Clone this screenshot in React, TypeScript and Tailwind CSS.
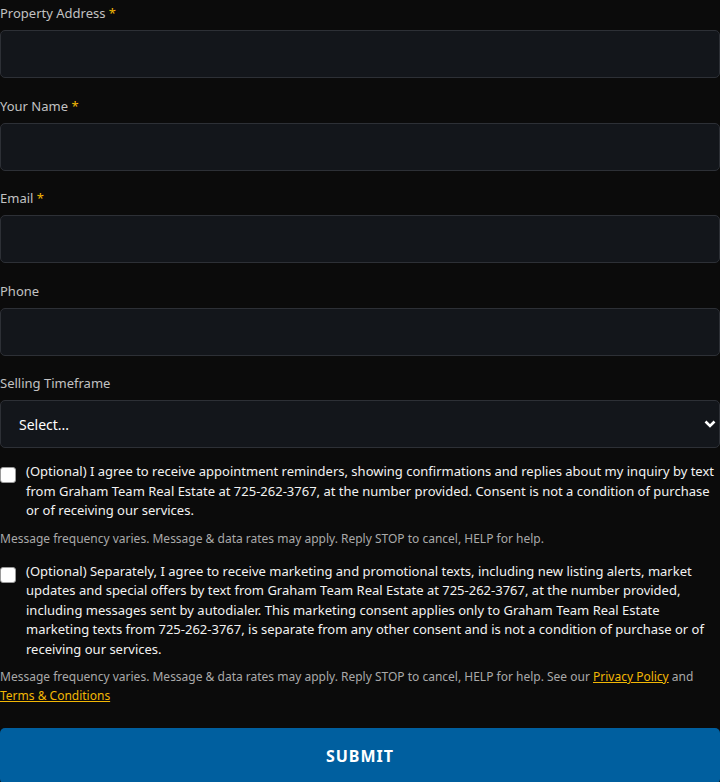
import React from "react";

const Label = ({ text, req }: { text: string; req?: boolean }) => (
  <label className="block text-[13px] leading-5 text-[#c2c2c2] mb-[7px]">
    {text}
    {req && <span className="text-[#f2b705]"> *</span>}
  </label>
);

const Input = () => (
  <input
    type="text"
    className="block w-full h-[48px] rounded-[5px] border border-[#2d3036] bg-[#13161b] px-4 text-white outline-none"
  />
);

export default function App() {
  return (
    <div
      className="min-h-[782px] bg-[#0b0b0b] pt-[3px] overflow-hidden"
      style={{ fontFamily: '"Noto Sans", sans-serif' }}
    >
      <div className="flex flex-col">
        <div>
          <Label text="Property Address" req />
          <Input />
        </div>
        <div className="mt-[18px]">
          <Label text="Your Name" req />
          <Input />
        </div>
        <div className="mt-[17px]">
          <Label text="Email" req />
          <Input />
        </div>
        <div className="mt-[18px]">
          <Label text="Phone" />
          <Input />
        </div>
        <div className="mt-[17px]">
          <Label text="Selling Timeframe" />
          <div className="relative">
            <select className="block w-full h-[48px] appearance-none rounded-[5px] border border-[#2d3036] bg-[#13161b] pl-[18px] text-[14px] text-white outline-none">
              <option>Select...</option>
            </select>
            <svg
              className="absolute right-[4px] top-[19px] pointer-events-none"
              width="12"
              height="10"
              viewBox="0 0 12 10"
            >
              <path d="M1.5 2.5 L6 7 L10.5 2.5" fill="none" stroke="#ffffff" strokeWidth="2.6" />
            </svg>
          </div>
        </div>

        <div className="mt-[14px] flex items-start gap-[10px]">
          <span className="mt-[5px] h-[16px] w-[16px] shrink-0 rounded-[3px] bg-white border border-[#9a9a9a]" />
          <p className="text-[13px] leading-[19.5px] text-[#f2f2f2]">
            (Optional) I agree to receive appointment reminders, showing confirmations and replies about my inquiry by text from Graham Team Real Estate at 725-262-3767, at the number provided. Consent is not a condition of purchase or of receiving our services.
          </p>
        </div>
        <p className="mt-[8px] text-[12px] leading-[19px] text-[#a9a9a9]">
          Message frequency varies. Message &amp; data rates may apply. Reply STOP to cancel, HELP for help.
        </p>

        <div className="mt-[14px] flex items-start gap-[10px]">
          <span className="mt-[5px] h-[16px] w-[16px] shrink-0 rounded-[3px] bg-white border border-[#9a9a9a]" />
          <p className="text-[13px] leading-[19.5px] text-[#f2f2f2]">
            (Optional) Separately, I agree to receive marketing and promotional texts, including new listing alerts, market updates and special offers by text from Graham Team Real Estate at 725-262-3767, at the number provided, including messages sent by autodialer. This marketing consent applies only to Graham Team Real Estate marketing texts from 725-262-3767, is separate from any other consent and is not a condition of purchase or of receiving our services.
          </p>
        </div>
        <p className="mt-[8px] text-[12px] leading-[19px] text-[#a9a9a9]">
          Message frequency varies. Message &amp; data rates may apply. Reply STOP to cancel, HELP for help. See our{" "}
          <a className="text-[#f2b705] underline">Privacy Policy</a> and{" "}
          <a className="text-[#f2b705] underline">Terms &amp; Conditions</a>
        </p>

        <button className="mt-[23px] h-[56px] w-full rounded-[5px] bg-[#005f9f] text-[16px] font-bold tracking-[1px] text-white">
          SUBMIT
        </button>
      </div>
    </div>
  );
}
